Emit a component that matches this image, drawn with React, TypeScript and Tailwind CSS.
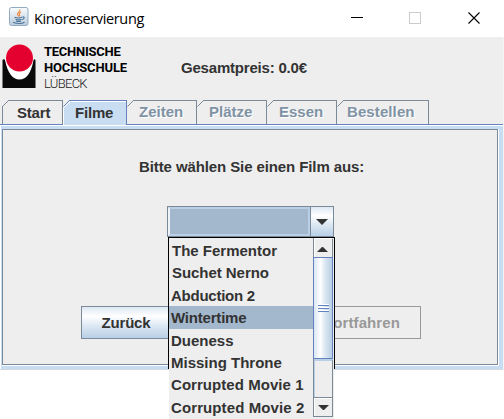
import React from "react";

type TabInfo = { label: string; state: "normal" | "active" | "disabled"; box: string; text: string };

const tabs: TabInfo[] = [
  { label: "Start", state: "normal", box: "w-[61px]", text: "left-[15px] w-[34px] tracking-[-0.2px]" },
  { label: "Filme", state: "active", box: "w-[64px]", text: "left-[12px] w-[38px] tracking-[-0.2px]" },
  { label: "Zeiten", state: "disabled", box: "w-[70px]", text: "left-[12px] w-[44px]" },
  { label: "Plätze", state: "disabled", box: "w-[70px]", text: "left-[12px] w-[44px]" },
  { label: "Essen", state: "disabled", box: "w-[70px]", text: "left-[12px] w-[44px]" },
  { label: "Bestellen", state: "disabled", box: "w-[92px]", text: "left-[10px] w-[68px] tracking-[0.1px]" },
];

const films = [
  { title: "The Fermentor", cls: "pl-[3px]" },
  { title: "Suchet Nerno", cls: "pl-[3px] tracking-[-0.05px]" },
  { title: "Abduction 2", cls: "pl-[2px] tracking-[-0.25px]" },
  { title: "Wintertime", cls: "pl-[2px] tracking-[-0.2px] bg-[#a3b8cc]" },
  { title: "Dueness", cls: "pl-[2px]" },
  { title: "Missing Throne", cls: "pl-[2px]" },
  { title: "Corrupted Movie 1", cls: "pl-[2px] tracking-[0.05px]" },
  { title: "Corrupted Movie 2", cls: "pl-[2px] tracking-[0.1px]" },
];

function JavaIcon() {
  return (
    <svg width="20" height="20" viewBox="0 0 20 20" fill="none" className="block">
      <defs>
        <linearGradient id="tile" x1="0" y1="0" x2="0" y2="1">
          <stop offset="0" stopColor="#fafcfe" />
          <stop offset="1" stopColor="#b9cbdc" />
        </linearGradient>
      </defs>
      <rect x="0.5" y="0.5" width="18.5" height="18" rx="2" fill="url(#tile)" stroke="#93a9c4" />
      <path d="M10.8 2.5c1 2-2.8 3-2.3 4.8.2.9 1 1.200 1.200 2.200M12 5c-1.500.8-2.200 1.500-1.500 2.500.5.8.2 1.300-.3 1.800" stroke="#ee8c45" strokeWidth="1.2" />
      <path d="M5.500 10.300c2 .8 5.500.8 7.500 0M6.500 12.300c2 .7 4.500.7 6 0M7 14c1.500.6 3.500.6 5 0M4 15.200c2 1.700 9 1.700 11.500 0M13.500 10c2.200-.5 2.300 1.600-.3 2.700" stroke="#4a7296" strokeWidth="1.1" />
    </svg>
  );
}

function Logo() {
  return (
    <svg width="34" height="46" viewBox="0 0 34 46" className="block">
      <path d="M.5 16L2 15L5 18V14H30V18L32 15L33.500 16V44H.5Z" fill="#0a0a0a" />
      <path d="M3 14V16Q7 35.500 17.500 35.500Q28 35.500 31.500 16V14Z" fill="#fff" />
      <ellipse cx="17.5" cy="14" rx="13.500" ry="13.500" fill="#e4002f" />
    </svg>
  );
}

function Tab({ tab }: { tab: TabInfo }) {
  const active = tab.state === "active";
  const stroke = active ? "border-[#6382bf]" : "border-[#7a8a99]";
  const color = tab.state === "disabled" ? "text-[#8093a5] [text-shadow:1px_1px_0_#fff]" : "text-[#333]";
  return (
    <div className={`relative h-[25px] shrink-0 ${tab.box}`}>
      <div className={`absolute left-[6px] right-0 top-0 h-full border-r border-t ${stroke} ${active ? "bg-[#c8ddf2] shadow-[inset_0_1px_0_#fff]" : ""}`} />
      <svg width="8" height="25" className="absolute left-0 top-0" fill="none">
        {active && <path d="M1 25V7L7 1H8V25Z" fill="#c8ddf2" />}
        {active && <path d="M.5 25V7.500L7.500 1.500" stroke="#fff" />}
        <path d="M.5 6.500L6.500 .500H8" stroke={active ? "#6382bf" : "#7a8a99"} />
        {tab.label === "Start" && <path d="M.5 6V25" stroke="#7a8a99" />}
      </svg>
      <span className={`absolute leading-[18px] whitespace-nowrap ${tab.state === "disabled" ? "top-[3px]" : "top-[4px]"} ${tab.text} ${color}`}>{tab.label}</span>
    </div>
  );
}

function Arrow({ up = false, wide = false }: { up?: boolean; wide?: boolean }) {
  return wide ? (
    <svg width="12" height="6" viewBox="0 0 12 6"><path d="M0 0H12L6 6Z" fill="#333" /></svg>
  ) : (
    <svg width="11" height="5" viewBox="0 0 11 5"><path d={up ? "M0 5H11L6 0H5Z" : "M0 0H11L6 5H5Z"} fill="#333" /></svg>
  );
}

function Dropdown() {
  return (
    <div className="absolute left-[168px] top-[237px] h-[182px] w-[167px] overflow-hidden">
      <div className="h-[132px] border-x border-t border-black bg-[#eee]" />
      <div className="mx-px h-[50px] bg-[#eee]" />
      <div className="absolute inset-x-px top-px flex h-[181px]">
        <ul className="w-[144px] pt-px">
          {films.map((f) => (
            <li key={f.title} className={`h-[22.4px] whitespace-nowrap leading-[24px] ${f.cls}`}>{f.title}</li>
          ))}
        </ul>
        <div className="flex h-[179px] w-[20px] flex-col border-l border-[#7a8a99]">
          <div className="flex h-[19px] items-center justify-center border-r border-t border-r-[#7a8a99] border-t-white pr-px pt-[2px] shadow-[inset_1px_0_0_#fff]"><Arrow up /></div>
          <div className="-ml-px flex h-[102px] items-center justify-center border border-[#6382bf] bg-[linear-gradient(90deg,#d9e6f3_0%,#fff_35%,#dde8f3_60%,#b8cfe5_100%)]">
            <div className="flex w-[11px] flex-col gap-px">
              {[0, 1, 2].map((i) => <div key={i} className="h-[2px] border-b border-[#6382bf] bg-white" />)}
            </div>
          </div>
          <div className="h-[38px] border-r border-t-2 border-r-[#7a8a99] border-t-[#b8cfe5] shadow-[inset_1px_0_0_#b8cfe5]" />
          <div className="flex h-[20px] items-center justify-center border-b border-r border-t border-[#7a8a99] shadow-[inset_1px_1px_0_#fff]"><Arrow /></div>
        </div>
      </div>
    </div>
  );
}

export default function App() {
  return (
    <div className="relative h-[419px] w-[504px] overflow-hidden bg-white font-['Liberation_Sans',Arial,sans-serif] text-[15px] font-bold text-[#333]">
      <header className="flex h-[37px] items-center pl-[9px] font-['Open_Sans','Noto_Sans',sans-serif] font-normal text-black">
        <div className="-mt-[3px]"><JavaIcon /></div>
        <span className="ml-[5px] w-[111px] whitespace-nowrap text-[14.5px] tracking-[-0.37px]">Kinoreservierung</span>
        <svg width="130" height="14" className="ml-auto mr-[23px]" fill="none">
          <path d="M0 5.500H12" stroke="#000" />
          <rect x="58.500" y=".5" width="11" height="11" stroke="#ccc" />
          <path d="M117.500 .500L128.500 11.500M128.500 .500L117.500 11.500" stroke="#000" strokeWidth="1.100" />
        </svg>
      </header>
      <main className="flex h-[333px] flex-col border-r border-[#f5f5f5] bg-[#eee]">
        <div className="flex h-[63px] pl-[2px] pt-[7px]">
          <Logo />
          <div className="ml-[8px] w-[89px] whitespace-nowrap font-[Roboto,sans-serif] text-[13px] leading-[16px] text-black">
            <div className="tracking-[-0.25px]">TECHNISCHE</div>
            <div className="tracking-[-0.15px]">HOCHSCHULE</div>
            <div className="font-light tracking-[-0.7px] text-[#222]">LÜBECK</div>
          </div>
          <span className="ml-[48px] mt-[15px] leading-[18px] tracking-[-0.2px]">Gesamtpreis: 0.0€</span>
        </div>
        <nav className="relative z-10 -mb-px flex h-[25px] pl-[2px]">
          {tabs.map((t) => <Tab key={t.label} tab={t} />)}
          <div className="absolute bottom-0 left-0 h-px w-[63px] bg-[#6382bf]" />
          <div className="absolute bottom-0 left-[126px] right-0 h-px bg-[#6382bf]" />
        </nav>
        <section className="flex h-[246px] flex-col border-b border-b-[#d3d9e0] bg-[#c8ddf2] pl-[2px] pr-[4px] pt-[5px] shadow-[inset_1px_2px_0_#fff,inset_1px_0_0_#b8cfe5]">
          <div className="flex h-[237px] flex-col border-b border-r border-white">
            <div className="flex h-[236px] flex-col border border-[#7a8a99] bg-[#eee]">
              <p className="ml-[136px] mt-[28px] w-[230px] whitespace-nowrap leading-[18px] tracking-[-0.1px]">Bitte wählen Sie einen Film aus:</p>
              <div className="ml-[164px] mt-[30px] flex h-[31px] w-[167px] border border-[#7a8a99] bg-[#eee]">
                <div className="w-[142px] border-2 border-[#b8cfe5] border-l-[#eef3f8] bg-[#a3b8cc]" />
                <div className="flex flex-1 items-center justify-center border-l border-[#7a8a99] bg-[linear-gradient(#dde8f3_0%,#fff_30%,#dde8f3_60%,#b8cfe5_100%)]"><Arrow wide /></div>
              </div>
              <div className="ml-[78px] mt-[69px] flex gap-[130px]">
                <button className="h-[33px] w-[90px] border border-[#7a8a99] bg-[linear-gradient(#dde8f3_0%,#fff_30%,#dde8f3_60%,#b8cfe5_100%)] pt-[2px] tracking-[-0.2px]">Zurück</button>
                <button className="h-[33px] w-[120px] border border-[#999] pl-[2px] pt-[2px] tracking-[0.1px] text-[#999]">Fortfahren</button>
              </div>
            </div>
          </div>
        </section>
      </main>
      <Dropdown />
    </div>
  );
}
